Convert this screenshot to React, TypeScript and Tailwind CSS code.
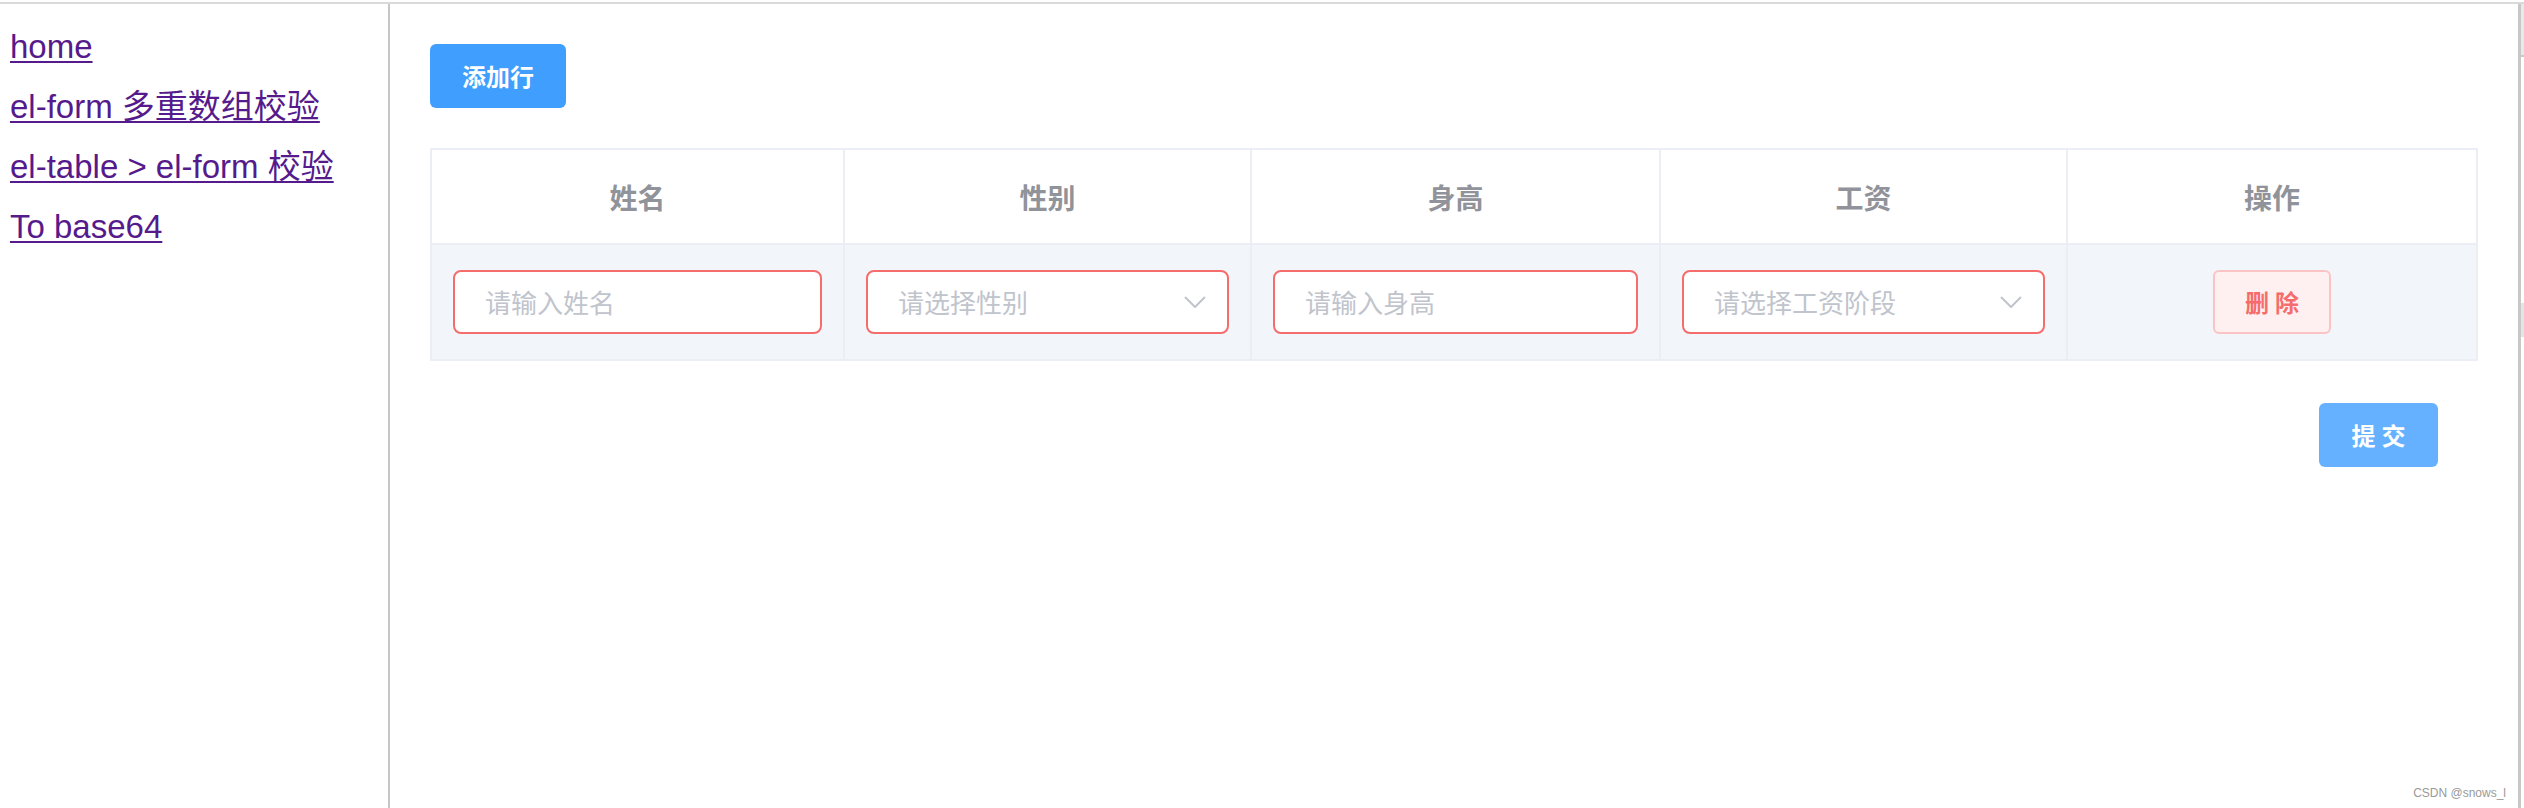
const links = [
  { href: "#/", label: "home" },
  { href: "#/form", label: "el-form 多重数组校验" },
  { href: "#/table", label: "el-table > el-form 校验" },
  { href: "#/base64", label: "To base64" },
];

const columns = ["姓名", "性别", "身高", "工资", "操作"];

function ArrowDown() {
  return (
    <svg width="22" height="12" viewBox="0 0 22 12" fill="none" className="shrink-0">
      <path d="M1 1 L11 11 L21 1" stroke="#c0c4cc" strokeWidth="2" />
    </svg>
  );
}

function TextInput({ placeholder }: { placeholder: string }) {
  return (
    <div className="flex h-[64px] w-full items-center rounded-[8px] border-2 border-[#f56c6c] bg-white px-[30px]">
      <span className="text-[26px] leading-none text-[#c0c4cc]">{placeholder}</span>
    </div>
  );
}

function SelectInput({ placeholder }: { placeholder: string }) {
  return (
    <div className="flex h-[64px] w-full items-center justify-between rounded-[8px] border-2 border-[#f56c6c] bg-white pl-[30px] pr-[21px]">
      <span className="text-[26px] leading-none text-[#c0c4cc]">{placeholder}</span>
      <ArrowDown />
    </div>
  );
}

export default function App() {
  return (
    <div className="relative h-[808px] w-full overflow-hidden bg-white pt-[2px] font-['Noto_Sans_CJK_SC',sans-serif]">
      <div className="flex h-full border-t-2 border-[#dadada]">
        {/* sidebar */}
        <aside className="w-[390px] shrink-0 border-r-2 border-[#c6c6c6] pl-[10px] pt-[25px]">
          <ul className="flex flex-col gap-[24px]">
            {links.map((link) => (
              <li key={link.href}>
                <a
                  href={link.href}
                  className="font-['Liberation_Sans','Noto_Sans_CJK_SC',sans-serif] text-[33px] leading-[36px] text-[#551a8b] underline decoration-2 underline-offset-[3px]"
                >
                  {link.label}
                </a>
              </li>
            ))}
          </ul>
        </aside>

        {/* main */}
        <main className="min-w-0 flex-1 px-[40px] pt-[40px]">
          <button
            type="button"
            className="flex h-[64px] w-[136px] items-center justify-center rounded-[6px] bg-[#409eff] text-[24px] font-semibold text-white"
          >
            添加行
          </button>

          <div className="mt-[40px] border-2 border-[#ebeef5]">
            <div className="grid grid-cols-[413px_407px_409px_407px_1fr] border-b-2 border-[#ebeef5] bg-white">
              {columns.map((c, i) => (
                <div
                  key={c}
                  className={[
                    "flex h-[93px] items-center justify-center text-[28px] font-bold text-[#909399]",
                    i < columns.length - 1 ? "border-r-2 border-[#ebeef5]" : "",
                  ].join(" ")}
                >
                  {c}
                </div>
              ))}
            </div>
            <div className="grid grid-cols-[413px_407px_409px_407px_1fr] bg-[#f2f5f9]">
              <div className="flex h-[114px] items-center border-r-2 border-[#ebeef5] px-[21px]">
                <TextInput placeholder="请输入姓名" />
              </div>
              <div className="flex h-[114px] items-center border-r-2 border-[#ebeef5] px-[21px]">
                <SelectInput placeholder="请选择性别" />
              </div>
              <div className="flex h-[114px] items-center border-r-2 border-[#ebeef5] px-[21px]">
                <TextInput placeholder="请输入身高" />
              </div>
              <div className="flex h-[114px] items-center border-r-2 border-[#ebeef5] px-[21px]">
                <SelectInput placeholder="请选择工资阶段" />
              </div>
              <div className="flex h-[114px] items-center justify-center">
                <button
                  type="button"
                  className="flex h-[64px] w-[118px] items-center justify-center gap-[6px] rounded-[6px] border-2 border-[#fbc4c4] bg-[#fef0f0] text-[24px] font-semibold text-[#f56c6c]"
                >
                  <span>删</span>
                  <span>除</span>
                </button>
              </div>
            </div>
          </div>

          <div className="mt-[42px] flex justify-end pr-[40px]">
            <button
              type="button"
              className="flex h-[64px] w-[119px] items-center justify-center gap-[6px] rounded-[6px] bg-[#66b1ff] text-[24px] font-semibold text-white"
            >
              <span>提</span>
              <span>交</span>
            </button>
          </div>
        </main>

        {/* window scrollbar edge */}
        <div className="w-[6px] shrink-0 border-l-[3px] border-[#c8c8c8]">
          <div className="h-[53px] border-b-2 border-[#c8c8c8] bg-[#e9e9ec]" />
          <div className="mt-[246px] h-[34px] bg-[#e4e4e6]" />
        </div>
      </div>

      <span className="absolute bottom-[9px] right-[18px] font-['Liberation_Sans',sans-serif] text-[12px] leading-none text-[#999999]">
        CSDN @snows_l
      </span>
    </div>
  );
}
